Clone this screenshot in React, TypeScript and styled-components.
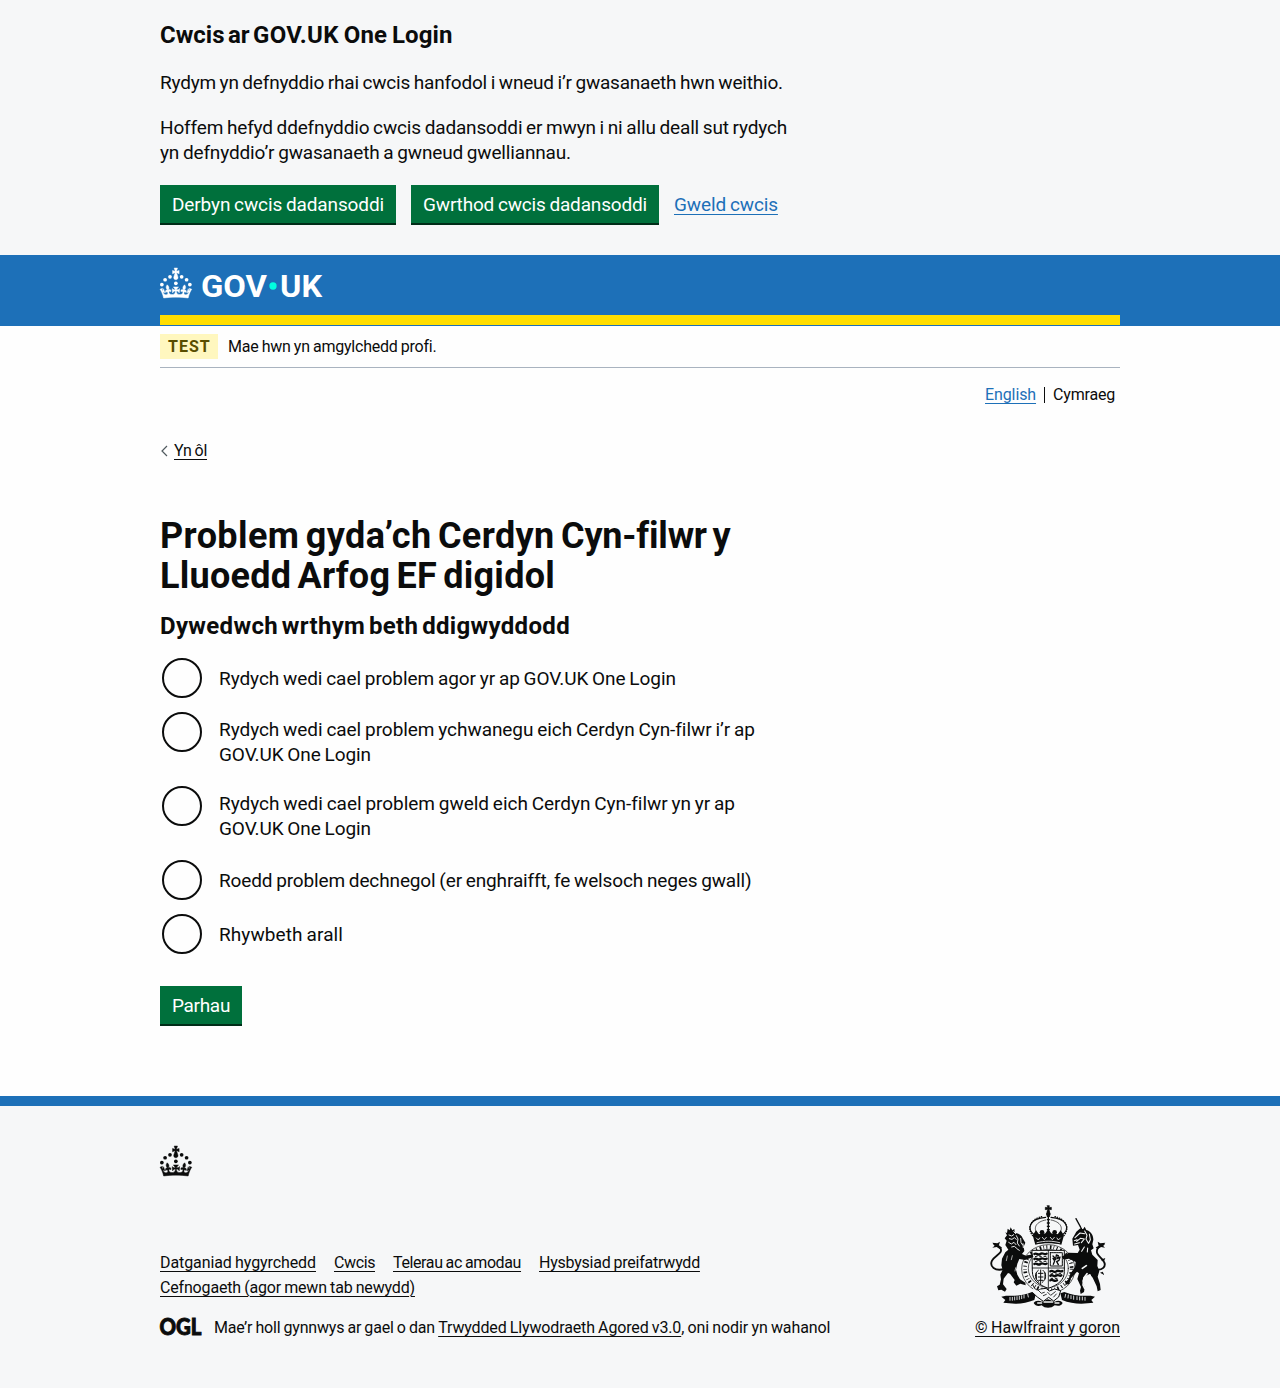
import React, { useState } from 'react';
import styled, { createGlobalStyle, css } from 'styled-components';

const color = {
  ink: '#0b0c0c',
  blue: '#1d70b8',
  green: '#00703c',
  pale: '#f6f7f8',
  yellow: '#ffdd00',
};

const Global = createGlobalStyle`
  *, *::before, *::after { box-sizing: border-box; }
  body {
    margin: 0;
    background: #fefefe;
    color: ${color.ink};
    font-family: Roboto, "Liberation Sans", sans-serif;
    -webkit-font-smoothing: antialiased;
  }
  h1, h2, p, ul { margin: 0; padding: 0; }
`;

type Tracked = { $ls?: number };
const tracking = css<Tracked>`
  letter-spacing: ${p => p.$ls ?? 0}px;
`;

const Container = styled.div`
  width: 960px;
  margin: 0 auto;
`;

const Line = styled.span<Tracked>`
  display: block;
  white-space: nowrap;
  ${tracking}
`;

const Run = styled.span<Tracked & { $ws?: number }>`
  white-space: nowrap;
  ${p => p.$ws !== undefined && css`word-spacing: ${p.$ws}px;`}
  ${tracking}
`;

const Link = styled.a<Tracked & { $tone?: string }>`
  color: ${p => p.$tone ?? color.ink};
  white-space: nowrap;
  text-decoration: underline;
  text-decoration-thickness: 1px;
  text-underline-offset: 3px;
  ${tracking}
`;

const CookieBanner = styled.section`
  height: 255px;
  padding-top: 20px;
  background: ${color.pale};
`;

const SubHeading = styled.h2<{ $ws: number }>`
  font-size: 24px;
  line-height: 30px;
  font-weight: 700;
  word-spacing: ${p => p.$ws}px;
`;

const Paragraph = styled.p`
  margin-top: 20px;
  font-size: 19px;
  line-height: 25px;
  word-spacing: -0.8px;
`;

const Actions = styled.div`
  display: flex;
  align-items: flex-start;
  gap: 15px;
  margin-top: 20px;
  font-size: 19px;
  line-height: 40px;
  word-spacing: -0.8px;
`;

const Button = styled.button<Tracked & { $width: number }>`
  width: ${p => p.$width}px;
  height: 38px;
  padding: 2px 0 0;
  border: 0;
  background: ${color.green};
  box-shadow: 0 2px 0 #002d18;
  color: #fff;
  font: 400 19px/36px Roboto, "Liberation Sans", sans-serif;
  word-spacing: -0.8px;
  white-space: nowrap;
  ${tracking}
`;

const Header = styled.header`
  height: 71px;
  background: ${color.blue};
`;

const HeaderInner = styled(Container)`
  height: 70px;
  padding-top: 13px;
  border-bottom: 10px solid ${color.yellow};
`;

const Logo = styled.svg`
  display: block;
  overflow: visible;
  font-family: Roboto, "Liberation Sans", sans-serif;
`;

const PhaseBanner = styled(Container)`
  display: flex;
  align-items: center;
  height: 42px;
  border-bottom: 1px solid #a9b3bf;
  font-size: 16px;
  word-spacing: -0.6px;
`;

const Tag = styled.strong`
  height: 25px;
  width: 58px;
  margin-right: 10px;
  padding-left: 8px;
  background: #fff7bf;
  color: #594d00;
  font-size: 16px;
  line-height: 26px;
  letter-spacing: 1px;
`;

const Languages = styled.nav`
  display: flex;
  justify-content: flex-end;
  align-items: center;
  height: 20px;
  margin-top: 17px;
  padding-right: 5px;
  font-size: 16px;
  line-height: 20px;
`;

const Current = styled.span<Tracked>`
  display: flex;
  align-items: center;
  &::before {
    content: '';
    width: 1px;
    height: 16px;
    margin: 0 8px;
    background: ${color.ink};
  }
  ${tracking}
`;

const Back = styled.div`
  display: flex;
  align-items: center;
  gap: 6px;
  height: 20px;
  margin-top: 36px;
  font-size: 16px;
  line-height: 20px;
  word-spacing: -0.6px;
`;

const Main = styled.main`
  width: 640px;
  height: 635px;
  padding-top: 55px;
`;

const Title = styled.h1`
  margin-bottom: 15px;
  font-size: 36px;
  line-height: 40px;
  font-weight: 700;
  word-spacing: -3px;
`;

const Radios = styled.div`
  display: flex;
  flex-direction: column;
  gap: 10px;
  margin: 15px 0 30px;
  font-size: 19px;
  line-height: 25px;
  word-spacing: -0.8px;
`;

const Option = styled.label`
  display: grid;
  grid-template-columns: 40px 1fr;
  column-gap: 17px;
  min-height: 44px;
  padding-left: 2px;
`;

const Radio = styled.input`
  appearance: none;
  width: 40px;
  height: 40px;
  margin: 2px 0 0;
  border: 2px solid ${color.ink};
  border-radius: 50%;
  background: transparent;
  &:checked {
    background: radial-gradient(${color.ink} 10px, transparent 10.5px);
  }
`;

const OptionText = styled.span`
  align-self: center;
  padding: 7px 0;
`;

const Footer = styled.footer`
  height: 292px;
  padding-top: 40px;
  border-top: 10px solid ${color.blue};
  background: ${color.pale};
  font-size: 16px;
  word-spacing: -0.6px;
`;

const FooterGrid = styled.div`
  display: flex;
  justify-content: space-between;
  align-items: flex-end;
  height: 162px;
`;

const FooterLinks = styled.ul`
  display: flex;
  flex-wrap: wrap;
  column-gap: 18px;
  width: 640px;
  margin-bottom: 18px;
  list-style: none;
  line-height: 25px;
`;

const Licence = styled.div`
  display: flex;
  align-items: center;
  line-height: 20px;
`;

const Ogl = styled.svg`
  margin: -3px 13px 0 0;
  overflow: visible;
  font-family: Lato, "Liberation Sans", sans-serif;
  word-spacing: 0;
`;

const Copyright = styled.div`
  display: flex;
  flex-direction: column;
  align-items: center;
  line-height: 20px;
`;

const Crest = styled.svg`
  display: block;
  margin: 0 0 10px;
`;

function Crown() {
  return (
    <g>
      <circle cx="20" cy="17.6" r="3.7" />
      <circle cx="10.2" cy="23.5" r="3.7" />
      <circle cx="3.7" cy="33.2" r="3.7" />
      <circle cx="31.7" cy="30.6" r="3.7" />
      <circle cx="43.3" cy="17.6" r="3.7" />
      <circle cx="53.2" cy="23.5" r="3.7" />
      <circle cx="59.7" cy="33.2" r="3.7" />
      <path stroke="currentColor" strokeWidth="0.9" d="M33.1,9.8c.2-.1.3-.3.5-.5l4.6,2.4v-6.8l-4.6,1.5c-.1-.2-.3-.3-.5-.5l1.9-5.9h-6.7l1.9,5.9c-.2.1-.3.3-.5.5l-4.6-1.5v6.8l4.6-2.4c.1.2.3.3.5.5l-2.6,8c-.9,2.8,1.2,5.7,4.1,5.7h0c3,0,5.1-2.9,4.1-5.7l-2.6-8ZM37,37.9s-3.4,3.8-4.1,6.1c2.2,0,4.2-.5,6.4-2.8l-.7,8.5c-2-2.8-4.4-4.1-5.7-3.8.1,3.1.5,6.7,5.8,7.2,3.7.3,6.7-1.5,7-3.8.4-2.6-2-4.3-3.7-1.6-1.4-4.5,2.4-6.1,4.9-3.2-1.9-4.5-1.8-7.7,2.4-10.9,3,4,2.6,7.3-1.2,11.1,2.4-1.3,6.2,0,4,4.6-1.2-2.8-3.7-2.2-4.2.2-.3,1.7.7,3.7,3,4.2,1.9.3,4.7-.9,7-5.9-1.3,0-2.4.7-3.9,1.7l2.4-8c.6,2.3,1.4,3.7,2.2,4.5.6-1.6.5-2.8,0-5.3l5,1.8c-2.6,3.6-5.2,8.7-7.3,17.5-7.4-1.1-15.7-1.7-24.5-1.7h0c-8.8,0-17.1.6-24.5,1.7-2.1-8.9-4.7-13.9-7.3-17.5l5-1.8c-.5,2.5-.6,3.7,0,5.3.8-.8,1.6-2.3,2.2-4.5l2.4,8c-1.5-1-2.6-1.7-3.9-1.7,2.3,5,5.2,6.2,7,5.9,2.3-.4,3.3-2.4,3-4.2-.5-2.4-3-3.1-4.2-.2-2.2-4.6,1.6-6,4-4.6-3.7-3.7-4.2-7.1-1.2-11.1,4.2,3.2,4.3,6.4,2.4,10.9,2.5-2.8,6.3-1.3,4.9,3.2-1.8-2.7-4.1-1-3.7,1.6.3,2.3,3.3,4.1,7,3.8,5.4-.5,5.7-4.2,5.8-7.2-1.3-.2-3.7,1-5.7,3.8l-.7-8.5c2.2,2.3,4.2,2.7,6.4,2.8-.7-2.3-4.1-6.1-4.1-6.1h10.6,0Z" />
    </g>
  );
}

function RoyalArms() {
  return (
    <Crest width="116" height="103" viewBox="45 30 348 309" fill="none" stroke={color.ink} strokeLinecap="round" strokeLinejoin="round">
      {/* crown */}
      <path d="M217 32h6l-1 6 7-1v7l-7-1 2 8h-8l2-8-7 1v-7l7 1z" fill={color.ink} stroke={color.ink} strokeWidth="2" />
      <circle cx="220" cy="57" r="7" fill={color.ink} stroke="none" />
      <path d="M220 62v54" strokeWidth="9" strokeDasharray="4 6" strokeLinecap="butt" />
      <path d="M220 62v54" strokeWidth="4" />
      <path d="M180 122C150 98 168 70 212 67M260 122c30-24 12-52-32-55" strokeWidth="3.5" />
      <path d="M188 118C172 98 184 80 212 75M252 118c16-20 4-38-24-43" strokeWidth="2" />
      <path d="M173 122C154 98 168 69 206 64M267 122c19-24 5-53-33-58" strokeWidth="4" strokeDasharray="1 6" />
      <path d="M174 119l9-13 10 13-5 8zM210 117l10-15 10 15-6 9h-8zM266 119l-9-13-10 13 5 8z" fill={color.ink} stroke="none" />
      <circle cx="201" cy="112" r="7" fill={color.ink} stroke="none" />
      <circle cx="239" cy="112" r="7" fill={color.ink} stroke="none" />
      <path d="M173 121c28-7 66-7 94 0l-8 28c-24-6-54-6-78 0z" fill={color.ink} stroke="none" />
      <path d="M184 129l6 6 4-6M202 127l6 7 6-7M226 127l6 7 6-7M246 129l4 6 6-6M186 143c24-6 44-6 68 0" stroke={color.pale} strokeWidth="2.5" />
      {/* garter */}
      <ellipse cx="220" cy="222" rx="80" ry="73" strokeWidth="2" />
      <ellipse cx="220" cy="221" rx="70" ry="65" strokeWidth="11" strokeDasharray="3 8 5 6 2 7" strokeLinecap="butt" />
      <ellipse cx="220" cy="220" rx="60" ry="57" strokeWidth="2" fill={color.pale} />
      {/* shield */}
      <path d="M172 166h96v64c0 26-20 40-48 50-28-10-48-24-48-50z" strokeWidth="3" fill={color.pale} />
      <path d="M220 166v112M172 219h96" strokeWidth="2.5" />
      <path d="M178 177c8-5 11 6 18 0s12 4 19-1M178 192c8-5 11 6 18 0s12 4 19-1M178 207c8-5 11 6 18 0s12 4 19-1" strokeWidth="7" />
      <path d="M181 185l6-2M194 185l5 0M207 184l6 0M181 200l6-2M194 200l5 0M207 199l6 0" strokeWidth="3" />
      <rect x="226" y="173" width="36" height="40" strokeWidth="3" strokeDasharray="3 2" />
      <path d="M235 208l4-10-5-8 8 4 2-14 6 2-3 9 8-5-3 10-7 4 5 9M234 183l5 5" strokeWidth="4" />
      <path d="M197 225v43M190 226c-14 10-10 26 2 36M204 226c12 10 10 26-2 36M184 236v16M210 234v18M190 235h14M190 246h14M191 256h12" strokeWidth="3" />
      <path d="M226 229c8-5 11 6 18 0s12 4 18-1M226 242c8-5 11 6 18 0s10 4 15-1M226 256c8-5 11 6 20 0" strokeWidth="7" />
      <path d="M228 237l5-1M241 237l5 0M252 236l5 0M228 250l5 0M241 250l5 0" strokeWidth="3" />
      {/* lion */}
      <path d="M96 114l2-13 6 5 3-9 5 9 6-4 1 11c12 2 22 8 24 17l8 13-5 12 2 13-7 9 12 5 20-4 2 8-25 9-17-3-6 14-4 18 4 15 8 14 16 10 1 8-16-5-12 6-8-10 3-7-14-19-6-2-13 17-2 17 11 14-5 8-11-6-9 2-4-12 8-5 4-16-2-14 7-15-4-13 2-20 10-19 9-8-9-14 4-13-6-7 7-9-5-9z" fill={color.ink} stroke="none" />
      <path d="M102 120l8 3 6-4M103 131l8 2 7-5 6 5M101 142l8 5 8-5 6 7M124 122l5 10-2 12 6 9M137 130l1 13 5 7M110 156l8-2 7 6M127 162l6 4M116 110l6 6M144 146l1 12" stroke={color.pale} strokeWidth="2.8" />
      <path d="M97 183l-3 14M112 182l-3 12M122 218l-2 10" stroke={color.pale} strokeWidth="2" />
      <path d="M88 222c-29 8-45-8-37-25 7-15 35-22 25-38-4-7-12-7-18-12" strokeWidth="5.5" />
      <path d="M52 143l15 2 8-5-4 13 10 4-6 6-10-7-13 2 7-6z" fill={color.ink} stroke="none" />
      {/* unicorn */}
      <path d="M303 71l18 33" strokeWidth="4" strokeDasharray="4 2" />
      <path d="M292 131l12-21 12-10 8 3 5-8 5 10c14 4 21 16 21 29l-3 14 4 12-8 6 4 13 16 16-1 18 6 15-5 17 7 22 2 18-9 4-3-15-12-26-9-11-18 9-4 12 7 20-2 13-10 6-2-10 3-11-11-24 5-17-6-5-18 20-5 16-12 4 1-9 9-9 5-16 14-20 2-15-20-10-17 2-5-8 21-12 27 1 6-10-5-14-15 2z" fill={color.ink} stroke="none" />
      <path d="M300 128l15-14 14 2M305 139l11-9 12 2-9 11M329 108l7 13-3 11 7 12M343 117l3 17-5 11M298 137l8-3M299 147l14-4M328 156l-8 13M338 159l-1 12" stroke={color.pale} strokeWidth="3.2" />
      <path d="M336 236l-9 12-3 22 5 10M345 240l4 26-4 14M334 212l-12 8" stroke={color.pale} strokeWidth="5" />
      <path d="M354 222c30 8 42-9 31-25-8-12-26-19-17-37 4-8 12-7 18-12" strokeWidth="5.5" />
      <path d="M391 143l-15 2-8-5 3 13-9 4 6 6 10-7 12 2-6-6zM377 194l14-5-5 12zM383 230l5 10-13-7z" fill={color.ink} stroke="none" />
      {/* motto ribbon */}
      <path d="M79 305l14-3c27 2 52-1 78-11l12 4-5 20c-25 10-50 13-76 10l-17-2 6-8z" fill={color.ink} stroke="none" />
      <path d="M360 305l-13-3c-28 2-53-1-79-11l-12 4 5 20c25 10 51 13 77 10l17-2-6-8z" fill={color.ink} stroke="none" />
      <path d="M105 307v9M112 307v9M119 306v9M126 305v9M133 304v9M140 302v9M147 300v9M158 297l2 9M272 298l-2 9M280 300l-1 9M288 302v9M296 303v10M306 305v9M314 306v9M322 306v9M330 307v9" stroke={color.pale} strokeWidth="2.6" />
      <path d="M175 272c4 14 13 15 22 10l16-2 10 8 16-6 18 5-6 19-15 12-15-11-16 12-18-13-13-12" strokeWidth="3" fill={color.pale} />
      <path d="M190 286l9 9 9-3M218 292l9 9 14-11M205 302l9-4M236 306l8-9" strokeWidth="2.5" />
      <path d="M176 324c5-8 15-9 25-4l18-7 20 7c10-5 19-4 24 4-6 11-16 9-24 7-10 10-30 10-39 0-9 3-19 3-24-7z" fill={color.ink} stroke="none" />
      <path d="M188 324h12M240 324h12M207 321h26" stroke={color.pale} strokeWidth="4" />
    </Crest>
  );
}

const options: { id: string; lines: [string, number][] }[] = [
  { id: 'open', lines: [['Rydych wedi cael problem agor yr ap GOV.UK One Login', -0.07]] },
  { id: 'add', lines: [['Rydych wedi cael problem ychwanegu eich Cerdyn Cyn-filwr i’r ap', -0.055], ['GOV.UK One Login', -0.09]] },
  { id: 'view', lines: [['Rydych wedi cael problem gweld eich Cerdyn Cyn-filwr yn yr ap', -0.035], ['GOV.UK One Login', -0.09]] },
  { id: 'tech', lines: [['Roedd problem dechnegol (er enghraifft, fe welsoch neges gwall)', -0.13]] },
  { id: 'other', lines: [['Rhywbeth arall', 0.09]] },
];

const footerLinks: [string, number][] = [
  ['Datganiad hygyrchedd', -0.09],
  ['Cwcis', -0.39],
  ['Telerau ac amodau', -0.38],
  ['Hysbysiad preifatrwydd', -0.24],
  ['Cefnogaeth (agor mewn tab newydd)', -0.17],
];

export default function App() {
  const [picked, setPicked] = useState('');
  return (
    <>
      <Global />
      <CookieBanner>
        <Container>
          <SubHeading $ws={-1}>
            <Line $ls={0.09}>
              <Run $ls={0} $ws={-2.5}>Cwcis ar </Run>
              <Run $ls={0.3}>GOV.UK</Run> One Login
            </Line>
          </SubHeading>
          <Paragraph>
            <Line $ls={-0.21}>Rydym yn defnyddio rhai cwcis hanfodol i wneud i’r gwasanaeth hwn weithio.</Line>
          </Paragraph>
          <Paragraph>
            <Line $ls={-0.16}>Hoffem hefyd ddefnyddio cwcis dadansoddi er mwyn i ni allu deall sut rydych</Line>
            <Line $ls={-0.155}>yn defnyddio’r gwasanaeth a gwneud gwelliannau.</Line>
          </Paragraph>
          <Actions>
            <Button $width={236} $ls={-0.12}>Derbyn cwcis dadansoddi</Button>
            <Button $width={248} $ls={-0.17}>Gwrthod cwcis dadansoddi</Button>
            <Link href="#" $tone={color.blue} $ls={-0.11}>Gweld cwcis</Link>
          </Actions>
        </Container>
      </CookieBanner>

      <Header>
        <HeaderInner>
          <Logo width="162" height="30" viewBox="0 0 324 60" fill="#fff" color="#fff" role="img">
            <Crown />
            <text x="82" y="58" fontSize="61" fontWeight="700" textLength="132" lengthAdjust="spacingAndGlyphs">GOV</text>
            <circle cx="226" cy="36" r="7.3" fill="#00ffe0" />
            <text x="240" y="58" fontSize="61" fontWeight="700" textLength="84" lengthAdjust="spacingAndGlyphs">UK</text>
          </Logo>
        </HeaderInner>
      </Header>

      <PhaseBanner>
        <Tag>TEST</Tag>
        <Run $ls={-0.22}>Mae hwn yn amgylchedd profi.</Run>
      </PhaseBanner>

      <Container>
        <Languages>
          <Link href="#" $tone={color.blue} $ls={-0.11}>English</Link>
          <Current $ls={-0.19}>Cymraeg</Current>
        </Languages>
        <Back>
          <svg width="8" height="12" viewBox="0 0 8 12" fill="none" stroke="#505a5f" strokeWidth="1.2">
            <path d="M7 1 2 6l5 5" />
          </svg>
          <Link href="#" $ls={-0.3}>Yn ôl</Link>
        </Back>
        <Main>
          <Title>
            <Line $ls={0.4}>Problem gyda’ch Cerdyn <Run $ls={-0.2}>Cyn-filwr y</Run></Line>
            <Line $ls={0.26}>Lluoedd Arfog EF digidol</Line>
          </Title>
          <SubHeading $ws={-2.5}><Line $ls={0.33}>Dywedwch wrthym beth ddigwyddodd</Line></SubHeading>
          <Radios>
            {options.map(o => (
              <Option key={o.id}>
                <Radio type="radio" name="issue" checked={picked === o.id} onChange={() => setPicked(o.id)} />
                <OptionText>
                  {o.lines.map(([text, ls]) => <Line key={text} $ls={ls}>{text}</Line>)}
                </OptionText>
              </Option>
            ))}
          </Radios>
          <Button $width={82} $ls={-0.3}>Parhau</Button>
        </Main>
      </Container>

      <Footer>
        <Container>
          <Logo width="32" height="30" viewBox="0 0 64 60" fill={color.ink} color={color.ink}><Crown /></Logo>
          <FooterGrid>
            <div>
              <FooterLinks>
                {footerLinks.map(([text, ls]) => <li key={text}><Link href="#" $ls={ls}>{text}</Link></li>)}
              </FooterLinks>
              <Licence>
                <Ogl width="41" height="17" viewBox="0 0 41 17" fill={color.ink}>
                  <text x="-0.5" y="16.5" fontSize="22" fontWeight="900" textLength="42" lengthAdjust="spacingAndGlyphs" stroke={color.ink} strokeWidth="0.9">OGL</text>
                </Ogl>
                <span>
                  <Run $ls={-0.19}>Mae’r holl gynnwys ar gael o dan </Run>
                  <Link href="#" $ls={-0.14}>Trwydded Llywodraeth Agored v3.0</Link>
                  <Run $ls={-0.1}>, oni nodir yn wahanol</Run>
                </span>
              </Licence>
            </div>
            <Copyright>
              <RoyalArms />
              <Link href="#">© Hawlfraint y goron</Link>
            </Copyright>
          </FooterGrid>
        </Container>
      </Footer>
    </>
  );
}
